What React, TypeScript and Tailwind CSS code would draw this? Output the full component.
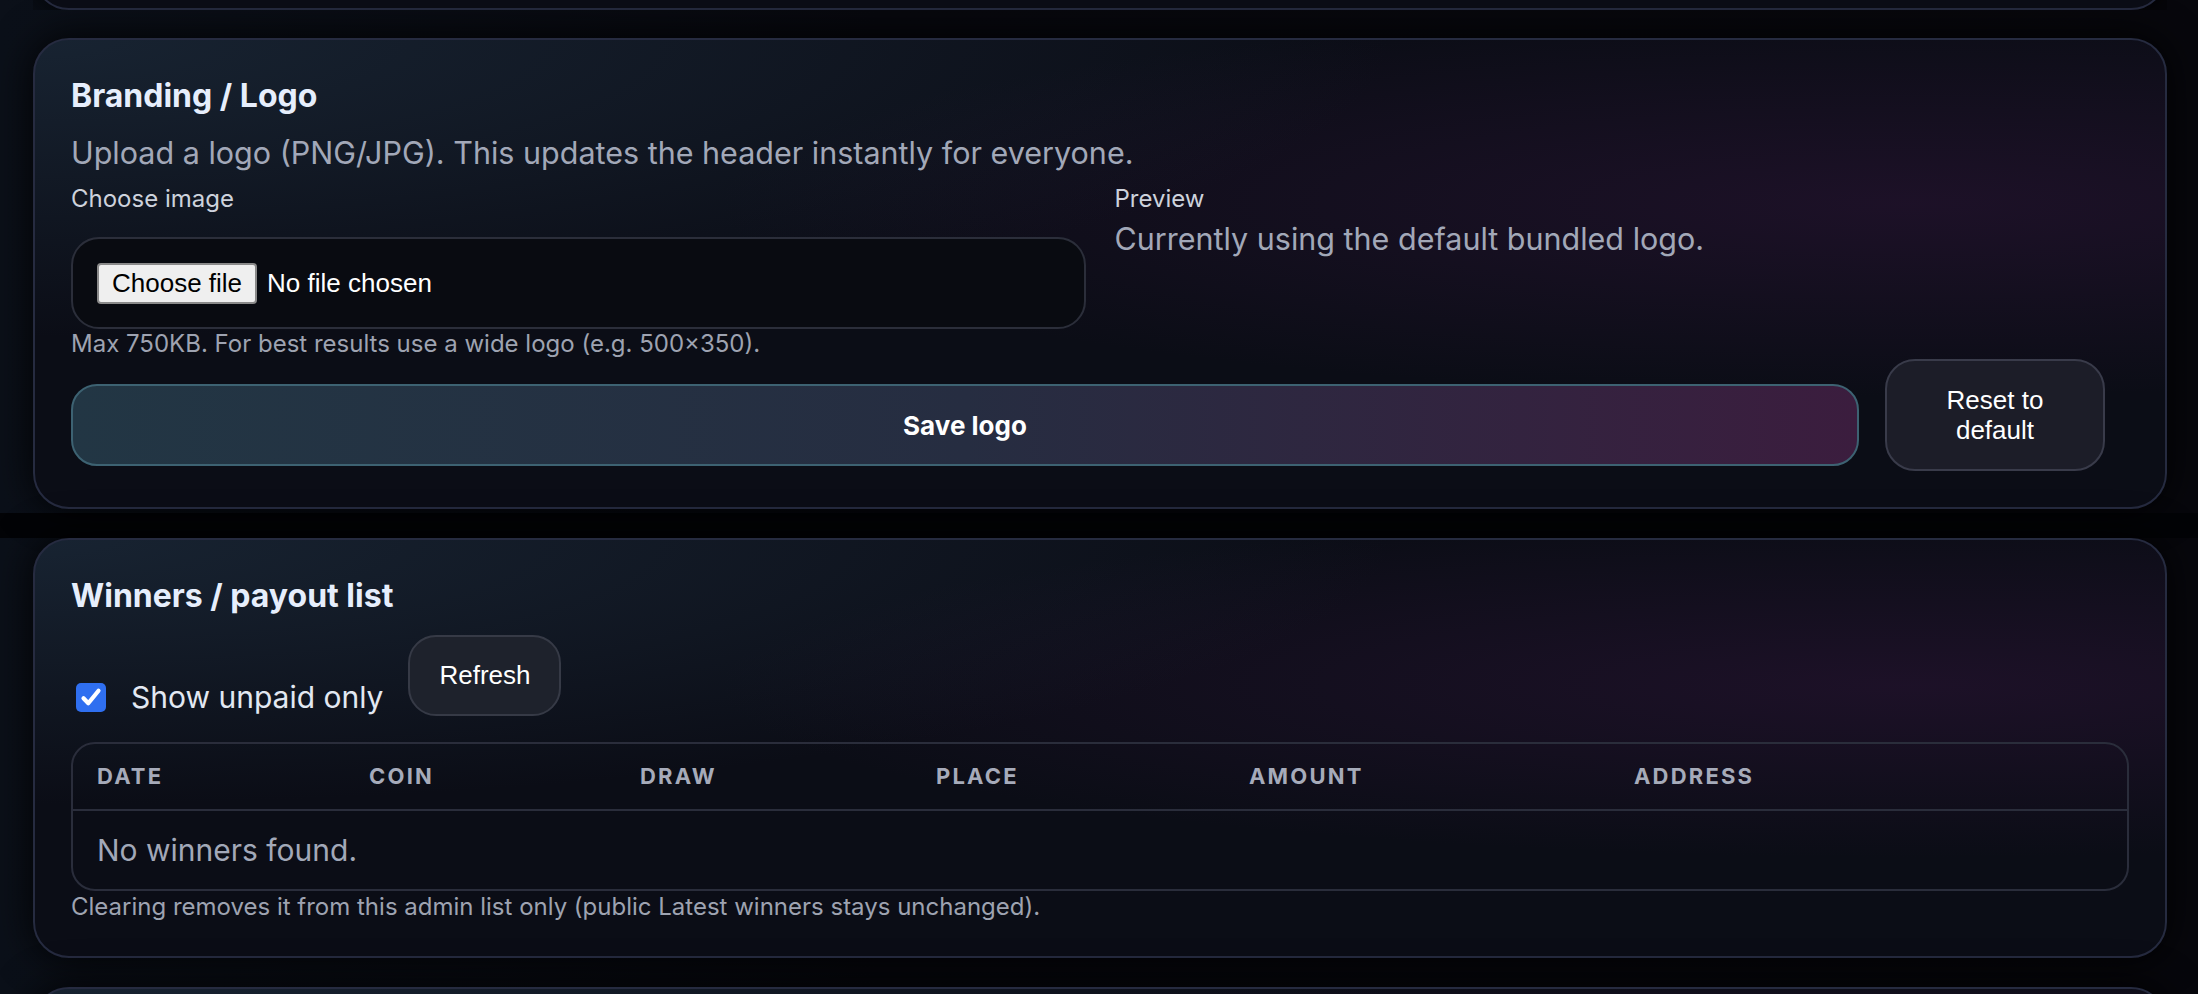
import React from 'react';

const card =
  "rounded-[36px] border-2 border-[#262b40] bg-[#0b0d16] bg-[radial-gradient(ellipse_at_0%_0%,rgba(32,50,68,0.6),transparent_45%),radial-gradient(ellipse_at_88%_35%,rgba(62,24,72,0.35),transparent_45%)] shadow-[0_0_40px_rgba(0,0,0,0.9)]";

const columns = ['Date', 'Coin', 'Draw', 'Place', 'Amount', 'Address'];

const CheckIcon = () => (
  <svg viewBox="0 0 16 16" className="w-[24px] h-[24px]" fill="none">
    <path d="M3 8.8l3.2 3.4L13 3.8" stroke="white" strokeWidth="2.8" strokeLinecap="round" strokeLinejoin="round" />
  </svg>
);

const BrandingCard = () => (
  <div className={`${card} ml-[33px] mr-[31px] p-[36px]`}>
    <h2 className="text-[32px] leading-[40px] font-bold text-[#e6eefc]">Branding / Logo</h2>
    <p className="mt-[17px] text-[30.5px] leading-[40px] text-[#a2a8b8]">
      Upload a logo (PNG/JPG). This updates the header instantly for everyone.
    </p>

    <div className="grid grid-cols-2 gap-[29px] mt-[10px]">
      <div className="flex flex-col">
        <span className="text-[24px] leading-[32px] text-[#cdd2dc]">Choose image</span>
        <div className="mt-[22px] h-[92px] rounded-[28px] border-2 border-[#2b2e3a] bg-[#090b11] px-[24px] flex items-center gap-[10px] font-['Liberation_Sans',Arial,sans-serif]">
          <span className="h-[41px] px-[13px] flex items-center rounded-[4px] border-2 border-[#8a8a8a] bg-[#efefef] text-[26px] text-black">
            Choose file
          </span>
          <span className="text-[26px] text-white">No file chosen</span>
        </div>
        <span className="text-[24px] leading-[30px] text-[#9ea3b1]">
          Max 750KB. For best results use a wide logo (e.g. 500×350).
        </span>
      </div>
      <div className="flex flex-col">
        <span className="text-[24px] leading-[32px] text-[#cdd2dc]">Preview</span>
        <span className="mt-[4px] text-[30.5px] leading-[40px] text-[#a2a8b8]">
          Currently using the default bundled logo.
        </span>
      </div>
    </div>

    <div className="flex items-start gap-[26px]">
      <button className="flex-1 mt-[25px] h-[82px] rounded-[26px] border-2 border-[#3d6272] bg-[linear-gradient(90deg,#223644,#262d41_50%,#3b1d3e)] text-[26px] font-bold text-white">
        Save logo
      </button>
      <button className="w-[220px] h-[112px] mr-[24px] rounded-[30px] border-2 border-[#393b4a] bg-[#1c1d28] text-[26px] leading-[30px] text-white font-['Liberation_Sans',Arial,sans-serif]">
        Reset to
        <br />
        default
      </button>
    </div>
  </div>
);

const WinnersCard = () => (
  <div className={`${card} ml-[33px] mr-[31px] px-[36px] pt-[36px] pb-[33px]`}>
    <h2 className="text-[32px] leading-[40px] font-bold text-[#e6eefc]">Winners / payout list</h2>

    <div className="mt-[19px] flex items-end gap-[25px]">
      <label className="flex items-center gap-[25px] mb-[1px] ml-[5px]">
        <span className="w-[30px] h-[29px] rounded-[5px] bg-[#2f6ff0] flex items-center justify-center">
          <CheckIcon />
        </span>
        <span className="text-[30px] leading-[36px] text-[#e2e8f2]">Show unpaid only</span>
      </label>
      <button className="w-[153px] h-[81px] rounded-[28px] border-2 border-[#363a46] bg-[#1e222c] text-[26px] text-white font-['Liberation_Sans',Arial,sans-serif]">
        Refresh
      </button>
    </div>

    <div className="mt-[26px] rounded-[24px] border-2 border-[#2a2d3b] overflow-hidden">
      <div className="grid grid-cols-[272px_271px_296px_313px_385px_1fr] h-[67px] items-center border-b-2 border-[#2a2d3b]">
        {columns.map((c) => (
          <span key={c} className="pl-[24px] text-[22px] font-bold uppercase tracking-[0.1em] text-[#a6abba]">
            {c}
          </span>
        ))}
      </div>
      <div className="h-[78px] flex items-center pl-[24px] text-[30px] text-[#a2a8b8]">No winners found.</div>
    </div>

    <p className="text-[24px] leading-[32px] text-[#9ea3b1]">
      Clearing removes it from this admin list only (public Latest winners stays unchanged).
    </p>
  </div>
);

export default function App() {
  return (
    <div className="h-[994px] overflow-hidden bg-[#030407] font-['Inter',sans-serif]">
      <div className="flex flex-col gap-[28px] pb-[4px] bg-[linear-gradient(90deg,#0b1019,#07080e_40%,#07070c)]">
        <div className="h-[10px] overflow-hidden flex flex-col justify-end ml-[33px] mr-[31px]">
          <div className={`${card} h-[80px] shrink-0`} />
        </div>
        <BrandingCard />
      </div>
      <div className="mt-[25px] flex flex-col gap-[29px] bg-[linear-gradient(90deg,#0b1019,#07080e_40%,#07070c)]">
        <WinnersCard />
        <div className={`${card} h-[80px] ml-[33px] mr-[31px]`} />
      </div>
    </div>
  );
}
